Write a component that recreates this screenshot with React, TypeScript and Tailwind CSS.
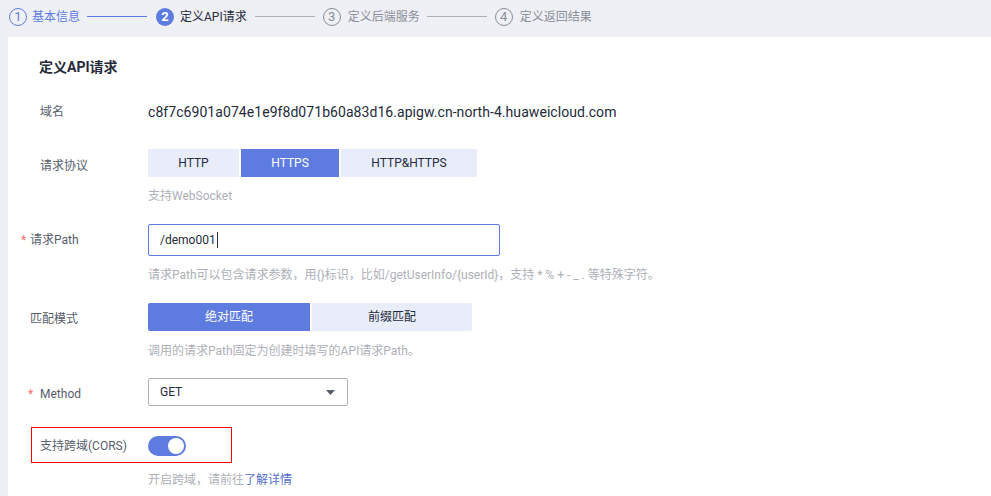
import React from 'react';

const font = { fontFamily: 'Roboto, "Noto Sans CJK SC", sans-serif' };

function StepCircle({ n, state }: { n: number; state: 'done' | 'active' | 'todo' }) {
  if (state === 'active') {
    return (
      <span className="w-[18px] h-[18px] rounded-full bg-[#5e7ce0] text-white text-[13px] font-bold flex items-center justify-center">
        {n}
      </span>
    );
  }
  const c = state === 'done' ? 'border-[#5e7ce0] text-[#5e7ce0]' : 'border-[#8a8e99] text-[#8a8e99]';
  return (
    <span className={`w-[18px] h-[18px] rounded-full border ${c} text-[13px] flex items-center justify-center`}>
      {n}
    </span>
  );
}

export default function App() {
  return (
    <div className="w-[991px] h-[496px] bg-[#eff0f5] overflow-hidden text-[12px]" style={font}>
      {/* Steps */}
      <div className="h-[37px] flex items-center pl-[9px] pb-[4px]">
        <div className="flex items-center gap-[5px]">
          <StepCircle n={1} state="done" />
          <span className="text-[#5e7ce0]">基本信息</span>
        </div>
        <div className="w-[60px] h-px bg-[#5e7ce0] ml-[7px] mr-[9px]"></div>
        <div className="flex items-center gap-[6px]">
          <StepCircle n={2} state="active" />
          <span className="text-[#252b3a]">定义API请求</span>
        </div>
        <div className="w-[60px] h-px bg-[#adb0b8] ml-[8px] mr-[8px]"></div>
        <div className="flex items-center gap-[7px]">
          <StepCircle n={3} state="todo" />
          <span className="text-[#8a8e99]">定义后端服务</span>
        </div>
        <div className="w-[60px] h-px bg-[#adb0b8] ml-[7px] mr-[8px]"></div>
        <div className="flex items-center gap-[7px]">
          <StepCircle n={4} state="todo" />
          <span className="text-[#8a8e99]">定义返回结果</span>
        </div>
      </div>

      {/* Panel */}
      <div className="ml-[8px] h-[459px] bg-white">
        <div className="pt-[20px] pl-[31px] h-[40px] leading-[20px] text-[14px] font-bold text-[#252b3a]">定义API请求</div>

        {/* 域名 */}
        <div className="mt-[25px] flex items-center h-[20px]">
          <div className="w-[140px] pl-[32px] text-[#575d6c]">域名</div>
          <div className="text-[14px] tracking-[0.06px] text-[#252b3a]">c8f7c6901a074e1e9f8d071b60a83d16.apigw.cn-north-4.huaweicloud.com</div>
        </div>

        {/* 请求协议 */}
        <div className="mt-[27px] flex items-center h-[28px]">
          <div className="w-[140px] pl-[32px] pt-[5px] text-[#575d6c]">请求协议</div>
          <div className="flex gap-[2px]">
            <div className="w-[91px] h-[28px] bg-[#e9edfa] rounded-l-[2px] flex items-center justify-center text-[#252b3a]">HTTP</div>
            <div className="w-[98px] h-[28px] bg-[#5e7ce0] flex items-center justify-center text-white">HTTPS</div>
            <div className="w-[136px] h-[28px] bg-[#e9edfa] rounded-r-[2px] flex items-center justify-center text-[#252b3a]">HTTP&amp;HTTPS</div>
          </div>
        </div>
        <div className="mt-[10px] pl-[140px] leading-[18px] text-[#adb0b8]">支持WebSocket</div>

        {/* 请求Path */}
        <div className="mt-[19px] flex items-center h-[32px]">
          <div className="w-[140px] pl-[13px] flex items-center text-[#575d6c]">
            <span className="text-[#f66f6a] w-[9px]">*</span>
            <span>请求Path</span>
          </div>
          <div className="w-[352px] h-[32px] border border-[#5e7ce0] rounded-[2px] pl-[11px] flex items-center text-[#252b3a]">
            /demo001<span className="inline-block w-px h-[16px] bg-[#252b3a] ml-px"></span>
          </div>
        </div>
        <div className="mt-[10px] pl-[140px] leading-[18px] text-[#adb0b8]">
          请求Path可以包含请求参数，用{'{}'}标识，比如/getUserInfo/{'{userId}'}，支持 * % + - _ . 等特殊字符。
        </div>

        {/* 匹配模式 */}
        <div className="mt-[19px] flex items-center h-[28px]">
          <div className="w-[140px] pl-[22px] pt-[4px] text-[#575d6c]">匹配模式</div>
          <div className="flex gap-[2px]">
            <div className="w-[162px] h-[28px] bg-[#5e7ce0] rounded-l-[2px] flex items-center justify-center text-white">绝对匹配</div>
            <div className="w-[160px] h-[28px] bg-[#e9edfa] rounded-r-[2px] flex items-center justify-center text-[#252b3a]">前缀匹配</div>
          </div>
        </div>
        <div className="mt-[11px] pl-[140px] leading-[18px] text-[#adb0b8]">调用的请求Path固定为创建时填写的API请求Path。</div>

        {/* Method */}
        <div className="mt-[18px] flex items-center h-[28px]">
          <div className="w-[140px] pl-[20px] pt-[4px] flex items-center text-[#575d6c]">
            <span className="text-[#f66f6a] w-[12px]">*</span>
            <span>Method</span>
          </div>
          <div className="w-[200px] h-[28px] border border-[#adb0b8] rounded-[2px] pl-[11px] pr-[12px] flex items-center justify-between text-[#252b3a]">
            <span>GET</span>
            <svg width="9" height="5" viewBox="0 0 9 5">
              <path d="M0 0 L9 0 L4.5 5 Z" fill="#575d6c" />
            </svg>
          </div>
        </div>

        {/* CORS */}
        <div className="mt-[21px] ml-[23px] w-[201px] h-[36px] border border-[#ff0000] flex items-center">
          <div className="w-[116px] pl-[8px] pt-[2px] text-[#575d6c]">支持跨域(CORS)</div>
          <div className="w-[38px] h-[20px] rounded-full bg-[#5e7ce0] flex items-center justify-end pr-[2px] mt-[1px]">
            <div className="w-[16px] h-[16px] rounded-full bg-white"></div>
          </div>
        </div>
        <div className="mt-[8px] pl-[140px] leading-[18px] text-[#adb0b8]">
          开启跨域，请前往<span className="text-[#526ecc]">了解详情</span>
        </div>
      </div>
    </div>
  );
}
